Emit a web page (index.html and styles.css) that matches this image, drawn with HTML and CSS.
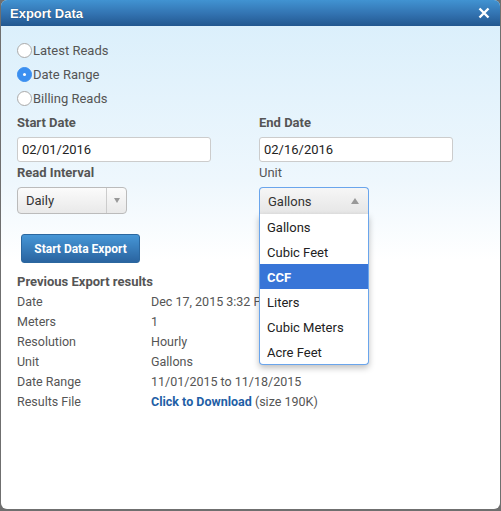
FILE: index.html
```html
<!DOCTYPE html>
<html>
<head>
<meta charset="utf-8">
<link rel="stylesheet" href="styles.css">
</head>
<body>
<div class="dialog">
  <div class="titlebar">
    <span class="title">Export Data</span>
    <svg class="close" width="12" height="12" viewBox="0 0 12 12"><path d="M1.5 1.5 L10.5 10.5 M10.5 1.5 L1.5 10.5" stroke="#fff" stroke-width="2.4" stroke-linecap="butt"/></svg>
  </div>
  <div class="content">
    <div class="radios">
      <label class="radio"><span class="circle"></span>Latest Reads</label>
      <label class="radio"><span class="circle checked"></span>Date Range</label>
      <label class="radio"><span class="circle"></span>Billing Reads</label>
    </div>
    <div class="grid">
      <div class="field">
        <div class="label bold">Start Date</div>
        <div class="input">02/01/2016</div>
      </div>
      <div class="field">
        <div class="label bold">End Date</div>
        <div class="input">02/16/2016</div>
      </div>
      <div class="field">
        <div class="label2 bold">Read Interval</div>
        <div class="select">
          <span class="sel-text">Daily</span>
          <span class="sel-btn"><span class="arrow-down"></span></span>
        </div>
      </div>
      <div class="field">
        <div class="label2">Unit</div>
        <div class="dropwrap">
          <div class="select open">
            <span class="sel-text">Gallons</span>
            <span class="arrow-up"></span>
          </div>
          <ul class="options">
            <li>Gallons</li>
            <li>Cubic Feet</li>
            <li class="hl">CCF</li>
            <li>Liters</li>
            <li>Cubic Meters</li>
            <li>Acre Feet</li>
          </ul>
        </div>
      </div>
    </div>
    <button class="btn">Start Data Export</button>
    <div class="prev-title">Previous Export results</div>
    <div class="results">
      <div class="k">Date</div><div class="v">Dec 17, 2015 3:32 PM</div>
      <div class="k">Meters</div><div class="v">1</div>
      <div class="k">Resolution</div><div class="v">Hourly</div>
      <div class="k">Unit</div><div class="v">Gallons</div>
      <div class="k">Date Range</div><div class="v">11/01/2015 to 11/18/2015</div>
      <div class="k">Results File</div><div class="v"><a class="dl">Click to Download</a> (size 190K)</div>
    </div>
  </div>
</div>
</body>
</html>
```
FILE: styles.css
```css
html, body { margin: 0; padding: 0; }
body {
  background: #6f6f6f;
  width: 501px;
  height: 511px;
  overflow: hidden;
  font-family: Roboto, "Liberation Sans", sans-serif;
}
.dialog {
  margin-left: 1px;
  width: 499px;
  height: 509px;
  border-radius: 6px;
  overflow: hidden;
  background: linear-gradient(to bottom, #d8eefb 0px, #eef7fd 180px, #ffffff 260px, #ffffff 100%);
  position: relative;
}
.titlebar {
  height: 26px;
  background: linear-gradient(to bottom, #4193d2 0%, #3272b0 55%, #22578f 100%);
  display: flex;
  align-items: center;
  justify-content: space-between;
  padding: 0 10px 0 9px;
}
.title {
  color: #fff;
  font-weight: bold;
  font-size: 13px;
  text-shadow: 0 0 1px rgba(0,0,0,0.5);
  font-family: "Liberation Sans", Arial, sans-serif;
}
.close { display: block; }
.content {
  padding: 12px 0 0 16px;
  color: #555;
  font-size: 13px;
}
.radios { display: flex; flex-direction: column; }
.radio {
  height: 24px;
  display: flex;
  align-items: center;
  color: #555;
}
.circle {
  width: 13px;
  height: 13px;
  border: 1px solid #aaa;
  border-radius: 50%;
  background: #fff;
  margin-right: 1px;
  box-sizing: content-box;
  position: relative;
}
.circle.checked {
  background: #3b8ff0;
  border-color: #3b8ff0;
}
.circle.checked::after {
  content: "";
  position: absolute;
  left: 5px; top: 5px;
  width: 3px; height: 3px;
  border-radius: 50%;
  background: #fff;
}
.grid {
  display: grid;
  grid-template-columns: 242px 242px;
}
.bold { font-weight: bold; }
.label {
  height: 24px;
  line-height: 25px;
  color: #555;
}
.label2 {
  height: 20px;
  line-height: 22px;
  color: #555;
}
.input {
  margin: 3px 0 0 0;
  width: 194px;
  height: 25px;
  box-sizing: border-box;
  border: 1px solid #ccc;
  border-radius: 3px;
  background: #fff;
  color: #222;
  padding-left: 4px;
  line-height: 24px;
}
.select {
  margin: 5px 0 0 0;
  width: 110px;
  height: 27px;
  box-sizing: border-box;
  border: 1px solid #bbb;
  border-radius: 4px;
  background: linear-gradient(to bottom, #fbfbfb, #e9e9e9);
  display: flex;
  align-items: center;
  color: #333;
}
.select .sel-text { flex: 1; padding-left: 8px; }
.sel-btn {
  width: 19px;
  height: 100%;
  border-left: 1px solid #ccc;
  display: flex;
  align-items: center;
  justify-content: center;
}
.arrow-down {
  width: 0; height: 0;
  border-left: 3.5px solid transparent;
  border-right: 3.5px solid transparent;
  border-top: 5px solid #999;
}
.arrow-up {
  width: 0; height: 0;
  border-left: 4px solid transparent;
  border-right: 4px solid transparent;
  border-bottom: 6px solid #999;
  margin-right: 9px;
}
.dropwrap { position: relative; }
.select.open {
  border-color: #6aa5ec;
  border-bottom: none;
  border-radius: 4px 4px 0 0;
  background: linear-gradient(to bottom, #f6f6f6, #e6e6e6);
  position: relative;
}
.options {
  position: absolute;
  left: 0;
  top: 27px;
  width: 110px;
  box-sizing: border-box;
  margin: 0;
  padding: 0;
  list-style: none;
  background: #fff;
  border: 1px solid #6aa5ec;
  border-top: none;
  border-radius: 0 0 4px 4px;
  box-shadow: 0 3px 6px rgba(0,0,0,0.25);
  z-index: 5;
}
.options li {
  height: 25px;
  line-height: 27px;
  padding-left: 7px;
  color: #222;
  overflow: hidden;
}
.options li.hl {
  background: #3875d7;
  color: #fff;
  font-weight: bold;
}
.btn {
  display: block;
  margin: 20px 0 0 4px;
  width: 119px;
  height: 29px;
  border: 1px solid #2b679f;
  border-radius: 3px;
  background: linear-gradient(to bottom, #4696d6, #2a64a0);
  color: #fff;
  font-family: Roboto, "Liberation Sans", sans-serif;
  font-weight: bold;
  font-size: 12px;
  padding: 0;
}
.prev-title {
  margin: 8px 0 0 0;
  height: 20px;
  line-height: 21px;
  font-weight: bold;
  color: #555;
}
.results {
  display: grid;
  grid-template-columns: 134px auto;
  grid-auto-rows: 20px;
  line-height: 22px;
  font-size: 12.5px;
  color: #555;
}
.dl {
  color: #1f5fa6;
  font-weight: bold;
}
```
